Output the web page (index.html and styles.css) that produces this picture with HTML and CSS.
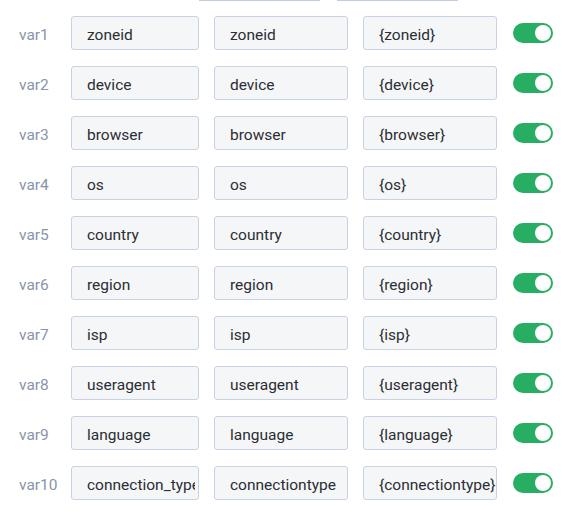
FILE: index.html
```html
<!DOCTYPE html>
<html>
<head>
<meta charset="utf-8">
<link rel="stylesheet" href="styles.css">
</head>
<body>
<div class="list">
  <div class="prev">
    <div class="prev-a"></div>
    <div class="prev-b"></div>
  </div>
  <div class="row"><div class="label">var1</div><div class="field f1"><span class="val">zoneid</span></div><div class="field"><span class="val">zoneid</span></div><div class="field"><span class="val">{zoneid}</span></div><div class="toggle"><span class="knob"></span></div></div>
  <div class="row"><div class="label">var2</div><div class="field f1"><span class="val">device</span></div><div class="field"><span class="val">device</span></div><div class="field"><span class="val">{device}</span></div><div class="toggle"><span class="knob"></span></div></div>
  <div class="row"><div class="label">var3</div><div class="field f1"><span class="val">browser</span></div><div class="field"><span class="val">browser</span></div><div class="field"><span class="val">{browser}</span></div><div class="toggle"><span class="knob"></span></div></div>
  <div class="row"><div class="label">var4</div><div class="field f1"><span class="val">os</span></div><div class="field"><span class="val">os</span></div><div class="field"><span class="val">{os}</span></div><div class="toggle"><span class="knob"></span></div></div>
  <div class="row"><div class="label">var5</div><div class="field f1"><span class="val">country</span></div><div class="field"><span class="val">country</span></div><div class="field"><span class="val">{country}</span></div><div class="toggle"><span class="knob"></span></div></div>
  <div class="row"><div class="label">var6</div><div class="field f1"><span class="val">region</span></div><div class="field"><span class="val">region</span></div><div class="field"><span class="val">{region}</span></div><div class="toggle"><span class="knob"></span></div></div>
  <div class="row"><div class="label">var7</div><div class="field f1"><span class="val">isp</span></div><div class="field"><span class="val">isp</span></div><div class="field"><span class="val">{isp}</span></div><div class="toggle"><span class="knob"></span></div></div>
  <div class="row"><div class="label">var8</div><div class="field f1"><span class="val">useragent</span></div><div class="field"><span class="val">useragent</span></div><div class="field"><span class="val">{useragent}</span></div><div class="toggle"><span class="knob"></span></div></div>
  <div class="row"><div class="label">var9</div><div class="field f1"><span class="val">language</span></div><div class="field"><span class="val">language</span></div><div class="field"><span class="val">{language}</span></div><div class="toggle"><span class="knob"></span></div></div>
  <div class="row"><div class="label">var10</div><div class="field f1"><span class="val">connection_type</span></div><div class="field"><span class="val">connectiontype</span></div><div class="field"><span class="val">{connectiontype}</span></div><div class="toggle"><span class="knob"></span></div></div>
</div>
</body>
</html>
```
FILE: styles.css
```css
html, body {
  margin: 0;
  padding: 0;
  background: #ffffff;
  font-family: Roboto, "Liberation Sans", sans-serif;
}
.list {
  display: flex;
  flex-direction: column;
  gap: 16px;
  width: 566px;
  height: 517px;
  overflow: hidden;
}
.prev {
  display: flex;
  gap: 17px;
  height: 0;
  padding-left: 199px;
}
.prev-a, .prev-b {
  width: 121px;
  height: 1px;
  background: #c3cde0;
}
.row {
  display: flex;
  align-items: center;
  height: 34px;
}
.label {
  width: 52px;
  padding: 4px 0 0 19px;
  font-size: 15.5px;
  line-height: 28px;
  color: #8a94ab;
  flex: none;
}
.field {
  box-sizing: border-box;
  width: 134px;
  height: 34px;
  margin-right: 15px;
  padding: 4px 0 0 15px;
  border: 1px solid #c8d2e3;
  border-radius: 3px;
  background: #f5f6f8;
  font-size: 15.5px;
  line-height: 28px;
  color: #2b2e33;
  white-space: nowrap;
  overflow: hidden;
  flex: none;
}
.val {
  display: block;
  overflow: hidden;
}
.field.f1 {
  width: 128px;
  padding-right: 3px;
}
.toggle {
  box-sizing: border-box;
  width: 40px;
  height: 20px;
  margin-left: 1px;
  border-radius: 10px;
  background: #28ae62;
  display: flex;
  align-items: center;
  justify-content: flex-end;
  padding-right: 2px;
  flex: none;
}
.knob {
  width: 16px;
  height: 16px;
  border-radius: 50%;
  background: #ffffff;
}
```
